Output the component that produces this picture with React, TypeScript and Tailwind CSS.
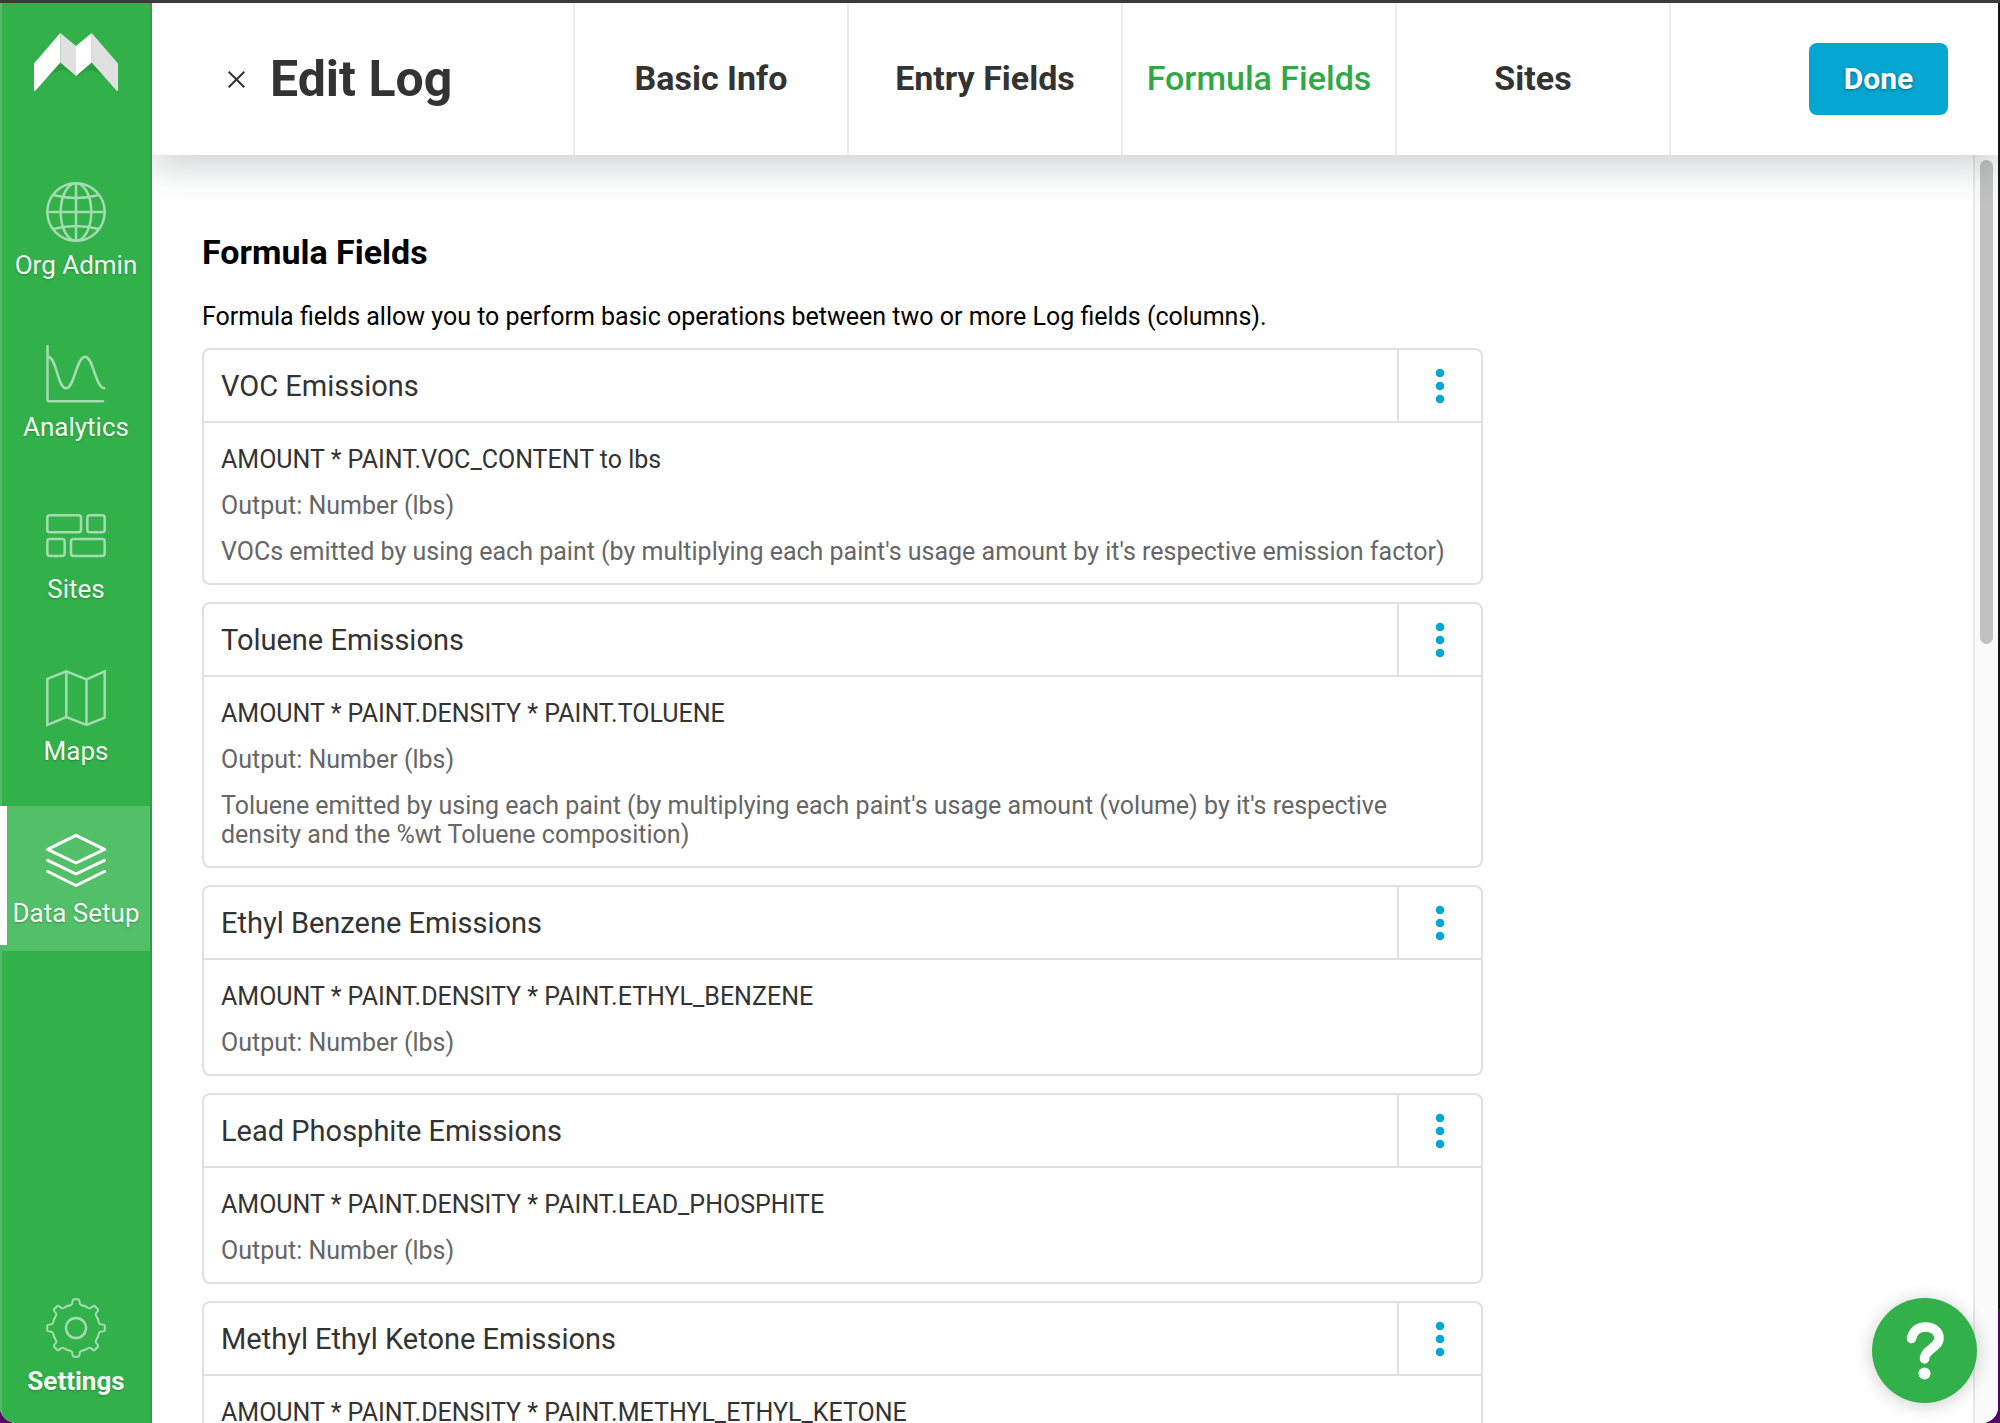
import clsx from "clsx";
import type { ReactNode } from "react";

interface NavItem {
  label: string;
  icon: ReactNode;
  active?: boolean;
}

interface FormulaField {
  name: string;
  formula: string;
  output: string;
  description?: string;
}

const NAV_ITEMS: NavItem[] = [
  {
    label: "Org Admin",
    icon: (
      <>
        <circle cx="30" cy="30" r="28.7" />
        <ellipse cx="30" cy="30" rx="15.3" ry="28.7" />
        <path d="M30 1.3V58.7M1.3 30H58.7M8 13.3Q30 18.7 52 13.3M8 46.7Q30 41.3 52 46.7" />
      </>
    ),
  },
  {
    label: "Analytics",
    icon: (
      <path d="M1.5 2V55.5Q1.5 57.2 3.2 57.2H57M2 12.7C10.5 12.7 11.5 44.3 20 44.3S30.5 12.7 39 12.7S49.5 44.3 58.3 44.3" />
    ),
  },
  {
    label: "Sites",
    icon: (
      <>
        <rect x="1.3" y="9.3" width="33.7" height="17" rx="2.5" />
        <rect x="41.3" y="9.3" width="17.4" height="17" rx="2.5" />
        <rect x="1.3" y="33" width="17.4" height="17" rx="2.5" />
        <rect x="25" y="33" width="33.7" height="17" rx="2.5" />
      </>
    ),
  },
  {
    label: "Maps",
    icon: (
      <path
        strokeLinejoin="miter"
        d="M1.3 10.8L20.3 3.3L40.5 11.3L58.7 3.3V49.7L40.5 57L20.3 49.2L1.3 57ZM20.3 3.3V49.2M40.5 11.3V57"
      />
    ),
  },
  {
    label: "Data Setup",
    active: true,
    icon: (
      <path
        strokeWidth="3"
        d="M1.7 19.3L30 5.3L58.5 19.3L30 33ZM1.7 30.3L30 44L58.5 30.3M1.7 41.5L30 55.5L58.5 41.5"
      />
    ),
  },
];

const TABS = ["Basic Info", "Entry Fields", "Formula Fields", "Sites"];
const ACTIVE_TAB = "Formula Fields";

const FIELDS: FormulaField[] = [
  {
    name: "VOC Emissions",
    formula: "AMOUNT * PAINT.VOC_CONTENT to lbs",
    output: "Number (lbs)",
    description:
      "VOCs emitted by using each paint (by multiplying each paint's usage amount by it's respective emission factor)",
  },
  {
    name: "Toluene Emissions",
    formula: "AMOUNT * PAINT.DENSITY * PAINT.TOLUENE",
    output: "Number (lbs)",
    description:
      "Toluene emitted by using each paint (by multiplying each paint's usage amount (volume) by it's respective density and the %wt Toluene composition)",
  },
  {
    name: "Ethyl Benzene Emissions",
    formula: "AMOUNT * PAINT.DENSITY * PAINT.ETHYL_BENZENE",
    output: "Number (lbs)",
  },
  {
    name: "Lead Phosphite Emissions",
    formula: "AMOUNT * PAINT.DENSITY * PAINT.LEAD_PHOSPHITE",
    output: "Number (lbs)",
  },
  {
    name: "Methyl Ethyl Ketone Emissions",
    formula: "AMOUNT * PAINT.DENSITY * PAINT.METHYL_ETHYL_KETONE",
    output: "Number (lbs)",
  },
];

const GEAR_ANGLES = [0, 45, 90, 135, 180, 225, 270, 315];

function Logo() {
  return (
    <svg width="84" height="58" viewBox="0 0 84 58" aria-hidden="true">
      <path d="M26.3 29L11 46Q20 38 30 37L42 43L54 37Q64 38 73 46L57.7 29Z" fill="#2c9c43" />
      <path d="M0 30.5L26.3 0V29.5L2 57Q0 59 0 57Z" fill="#fff" />
      <path d="M26.3 0L42 13V43L26.3 29.5Z" fill="#e0e0e0" />
      <path d="M42 13L57.7 0V29.5L42 43Z" fill="#fff" />
      <path d="M57.7 0L84 30.5V57Q84 59 82 57L57.7 29.5Z" fill="#e0e0e0" />
    </svg>
  );
}

function NavIcon({ children, bright }: { children: ReactNode; bright?: boolean }) {
  return (
    <svg
      width="60"
      height="60"
      viewBox="0 0 60 60"
      fill="none"
      stroke="currentColor"
      strokeWidth="2.5"
      strokeLinecap="round"
      strokeLinejoin="round"
      className={bright ? "text-white" : "text-[#a5dbb0]"}
      aria-hidden="true"
    >
      {children}
    </svg>
  );
}

function Sidebar() {
  return (
    <aside className="z-20 flex w-[152px] shrink-0 flex-col border-x-2 border-r-[#2ba043] border-l-[#57b96b] bg-[#32b14a]">
      <a href="#home" aria-label="Home" className="mt-[30px] flex justify-center">
        <Logo />
      </a>
      <nav className="mt-[67px] flex flex-col gap-[17px]">
        {NAV_ITEMS.map((item) => (
          <a
            key={item.label}
            href="#nav"
            className={clsx(
              "relative flex h-[145px] flex-col items-center gap-2 pt-6",
              item.active && "bg-[#54bf69]",
            )}
          >
            {item.active && (
              <span className="absolute top-0 -left-[2px] h-[139px] w-[7px] bg-white" />
            )}
            <NavIcon bright={item.active}>{item.icon}</NavIcon>
            <span className="text-[26px] leading-[30px] whitespace-nowrap text-[#f3fbf5] text-shadow-[0_1px_2px_rgba(0,0,0,0.25)]">
              {item.label}
            </span>
          </a>
        ))}
      </nav>
      <a href="#settings" className="mt-auto flex flex-col items-center gap-2 pb-[27px]">
        <NavIcon>
          <circle cx="30" cy="30" r="10" />
          {GEAR_ANGLES.map((angle) => (
            <path
              key={angle}
              transform={`translate(30 30) rotate(${angle})`}
              strokeWidth="2"
              d="M-9-21.8L-5.2-23Q-4-23.4-3.8-24.6L-3.3-27.6Q-3.1-28.8-2-28.8H2Q3.1-28.8 3.3-27.6L3.8-24.6Q4-23.4 5.2-23L9-21.8"
            />
          ))}
        </NavIcon>
        <span className="text-[26px] leading-[30px] font-bold text-[#f3fbf5] text-shadow-[0_1px_2px_rgba(0,0,0,0.25)]">
          Settings
        </span>
      </a>
    </aside>
  );
}

function Header() {
  return (
    <header className="relative z-10 flex h-[152px] shrink-0 items-stretch bg-white text-[#333] shadow-[0_12px_34px_rgba(30,60,60,0.22)]">
      <div className="flex w-[423px] items-center gap-[25px] border-r-2 border-[#ececec] pl-[76px]">
        <button type="button" aria-label="Close">
          <svg width="17" height="17" viewBox="0 0 17 17" stroke="currentColor" strokeWidth="2">
            <path d="M.7.7L16.3 16.3M16.3.7L.7 16.3" />
          </svg>
        </button>
        <h1 className="text-[50px] leading-none font-bold whitespace-nowrap">Edit Log</h1>
      </div>
      <nav className="flex">
        {TABS.map((tab) => (
          <a
            key={tab}
            href="#tab"
            className={clsx(
              "flex w-[274px] items-center justify-center border-r-2 border-[#ececec] pb-[2px] text-[34px] leading-10 whitespace-nowrap",
              tab === ACTIVE_TAB ? "font-medium text-[#2fa847]" : "font-bold",
            )}
          >
            {tab}
          </a>
        ))}
      </nav>
      <div className="flex flex-1 items-center justify-end pr-[50px]">
        <button
          type="button"
          className="h-[72px] w-[139px] rounded-lg bg-[#03a5d1] pb-[2px] text-[30px] font-bold text-white text-shadow-[0_1px_3px_rgba(0,0,0,0.35)]"
        >
          Done
        </button>
      </div>
    </header>
  );
}

function FieldCard({ field }: { field: FormulaField }) {
  return (
    <article className="rounded-lg border-2 border-[#e0e0e0] text-[25px] leading-[29px] text-[#333]">
      <div className="flex h-[73px] border-b-2 border-[#e0e0e0]">
        <h3 className="flex flex-1 items-center pt-[2px] pl-[17px] text-[29px]">{field.name}</h3>
        <button
          type="button"
          aria-label={`Options for ${field.name}`}
          className="flex w-[84px] items-center justify-center border-l-2 border-[#e0e0e0] text-[#03a5d1]"
        >
          <svg width="10" height="36" viewBox="0 0 10 36" fill="currentColor">
            <circle cx="5" cy="5" r="4.3" />
            <circle cx="5" cy="18" r="4.3" />
            <circle cx="5" cy="31" r="4.3" />
          </svg>
        </button>
      </div>
      <div className="flex flex-col gap-[17px] px-[17px] pt-[22px] pb-[17px]">
        <p>{field.formula}</p>
        <p className="text-[#666]">Output: {field.output}</p>
        {field.description && <p className="text-[#666]">{field.description}</p>}
      </div>
    </article>
  );
}

export default function App() {
  return (
    <div className="flex h-screen flex-col overflow-hidden bg-linear-to-b from-[#141414] from-92% to-[#560069] to-92% font-['Roboto',sans-serif]">
      <div className="h-[3px] shrink-0 bg-[#3a393d]" />
      <div className="mr-[2px] flex min-h-0 flex-1 overflow-hidden rounded-b-2xl bg-white">
        <Sidebar />
        <div className="flex min-w-0 flex-1 flex-col">
          <Header />
          <div className="flex min-h-0 flex-1">
            <main className="min-w-0 flex-1 overflow-y-auto pt-[77px] pl-[50px] [scrollbar-width:none]">
              <h2 className="text-[34px] leading-10 font-bold text-black">Formula Fields</h2>
              <p className="mt-[30px] text-[25px] leading-[29px] text-black">
                Formula fields allow you to perform basic operations between two or more Log fields
                (columns).
              </p>
              <div className="mt-[17px] flex max-w-[1281px] flex-col gap-[17px]">
                {FIELDS.map((field) => (
                  <FieldCard key={field.name} field={field} />
                ))}
              </div>
            </main>
            <div className="w-[25px] shrink-0 border-l-2 border-[#e8e8e8] bg-[#fafafa] pt-[5px] pl-[5px]">
              <div className="h-[484px] w-[13px] rounded-full bg-[#c1c1c1]" />
            </div>
          </div>
        </div>
      </div>

      <button
        type="button"
        aria-label="Help"
        className="fixed right-[23px] bottom-5 z-20 flex size-[105px] items-center justify-center rounded-full bg-[#32b14a] text-white shadow-[0_2px_18px_rgba(0,0,0,0.2)]"
      >
        <svg width="40" height="58" viewBox="0 0 40 58" fill="none" aria-hidden="true">
          <path
            d="M6.5 16.5C8 9 13 5 20.5 5C28 5 34 9.5 34 16C34 26 19.5 27 19.5 37"
            stroke="currentColor"
            strokeWidth="9.5"
            strokeLinecap="round"
          />
          <circle cx="19.5" cy="51.5" r="6" fill="currentColor" />
        </svg>
      </button>
    </div>
  );
}
